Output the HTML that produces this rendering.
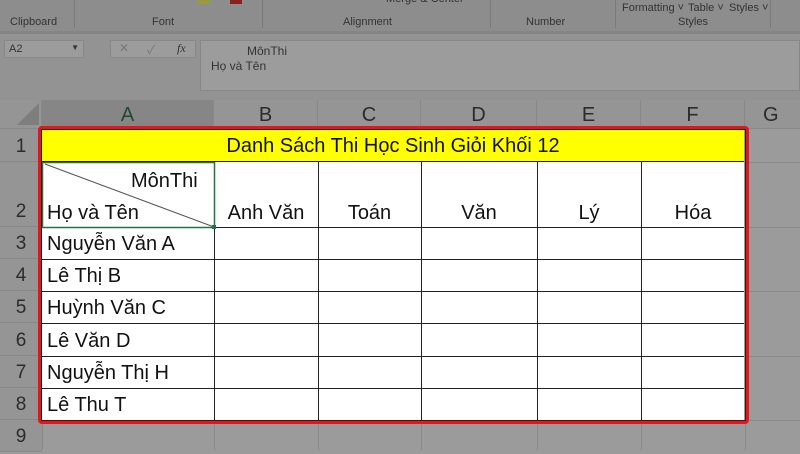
<!DOCTYPE html>
<html><head><meta charset="utf-8">
<style>
*{margin:0;padding:0;box-sizing:border-box}
body{width:800px;height:450px;overflow:hidden;background:#9b9b9b;position:relative;font-family:"Liberation Sans","Noto Sans CJK JP",sans-serif}
.a{position:absolute}
.rib{left:0;top:0;width:800px;height:31px;background:#8d8d8d;font-size:11px;color:#333}
.vs{background:#7a7a7a;width:1px}
.t{position:absolute;white-space:nowrap}
.colh{top:100px;height:28px;background:#959595;border-right:1px solid #888;text-align:center;font-size:20px;color:#2b2b2b;line-height:30px}
.rowh{left:0;width:42px;background:#959595;border-bottom:1px solid #888;text-align:center;font-size:19px;color:#2b2b2b}
.cell{position:absolute;font-size:20px;color:#111;white-space:nowrap}
</style></head><body>
<div class="a rib">
  <div class="t" style="left:10px;top:16px">Clipboard</div>
  <div class="t" style="left:152px;top:16px">Font</div>
  <div class="t" style="left:343px;top:16px">Alignment</div>
  <div class="t" style="left:526px;top:16px">Number</div>
  <div class="t" style="left:622px;top:2px">Formatting ˅</div>
  <div class="t" style="left:688px;top:2px">Table ˅</div>
  <div class="t" style="left:729px;top:2px">Styles ˅</div>
  <div class="t" style="left:678px;top:16px">Styles</div>
  <div class="t" style="left:386px;top:-7px">Merge &amp; Center</div>
  <div class="a" style="left:198px;top:0;width:12px;height:4px;background:#9a9a3a"></div>
  <div class="a" style="left:230px;top:0;width:12px;height:4px;background:#8a2020"></div>
  <div class="a vs" style="left:74px;top:0;height:28px"></div>
  <div class="a vs" style="left:262px;top:0;height:28px"></div>
  <div class="a vs" style="left:490px;top:0;height:28px"></div>
  <div class="a vs" style="left:615px;top:0;height:28px"></div>
  <div class="a vs" style="left:770px;top:0;height:28px"></div>
</div>
<div class="a" style="left:0;top:31px;width:800px;height:3px;background:#858585"></div>
<div class="a" style="left:0;top:34px;width:800px;height:66px;background:#939393"></div>
<div class="a" style="left:4px;top:40px;width:80px;height:18px;background:#9c9c9c;border:1px solid #888;font-size:11px;color:#333;padding:2px 4px">A2<span style="float:right;font-size:8px">▼</span></div>
<div class="a" style="left:110px;top:40px;width:86px;height:18px;background:#9c9c9c;border:1px solid #888;font-size:12px;color:#777"><span class="t" style="left:8px;top:0">✕</span><span class="t" style="left:36px;top:0">✓</span><span class="t" style="left:66px;top:0;color:#333;font-style:italic;font-family:'Liberation Serif',serif">fx</span></div>
<div class="a" style="left:200px;top:40px;width:600px;height:51px;background:#9c9c9c;border:1px solid #888;font-size:12px;color:#333">
  <div class="t" style="left:46px;top:3px">MônThi</div>
  <div class="t" style="left:10px;top:18px">Họ và Tên</div>
</div>
<div class="a" style="left:0;top:100px;width:42px;height:28px;background:#959595;border-right:1px solid #888"></div>
<svg class="a" style="left:15px;top:103px" width="25" height="23"><polygon points="24,0 24,22 2,22" fill="#7e7e7e"/></svg>
<div class="a colh" style="left:42px;width:172px;background:#868686;color:#1f4a2f">A</div>
<div class="a colh" style="left:214px;width:104px">B</div>
<div class="a colh" style="left:318px;width:103px">C</div>
<div class="a colh" style="left:421px;width:116px">D</div>
<div class="a colh" style="left:537px;width:104px">E</div>
<div class="a colh" style="left:641px;width:104px">F</div>
<div class="a colh" style="left:745px;width:70px;text-align:left;padding-left:18px">G</div>
<div class="a" style="left:0;top:128px;width:800px;height:1px;background:#888"></div>
<div class="a rowh" style="top:129px;height:33px;line-height:35px">1</div>
<div class="a rowh" style="top:162px;height:65px;line-height:100px">2</div>
<div class="a rowh" style="top:227px;height:32px;line-height:34px">3</div>
<div class="a rowh" style="top:259px;height:32px;line-height:34px">4</div>
<div class="a rowh" style="top:291px;height:32px;line-height:34px">5</div>
<div class="a rowh" style="top:323px;height:33px;line-height:35px">6</div>
<div class="a rowh" style="top:356px;height:32px;line-height:34px">7</div>
<div class="a rowh" style="top:388px;height:32px;line-height:34px">8</div>
<div class="a rowh" style="top:420px;height:32px;line-height:34px">9</div>
<div class="a" style="left:42px;top:129px;width:1px;height:321px;background:#888"></div>
<div class="a" style="left:214px;top:424px;width:1px;height:26px;background:#8a8a8a"></div>
<div class="a" style="left:318px;top:424px;width:1px;height:26px;background:#8a8a8a"></div>
<div class="a" style="left:421px;top:424px;width:1px;height:26px;background:#8a8a8a"></div>
<div class="a" style="left:537px;top:424px;width:1px;height:26px;background:#8a8a8a"></div>
<div class="a" style="left:641px;top:424px;width:1px;height:26px;background:#8a8a8a"></div>
<div class="a" style="left:745px;top:424px;width:1px;height:26px;background:#8a8a8a"></div>
<div class="a" style="left:749px;top:162px;width:51px;height:1px;background:#8a8a8a"></div>
<div class="a" style="left:749px;top:227px;width:51px;height:1px;background:#8a8a8a"></div>
<div class="a" style="left:749px;top:291px;width:51px;height:1px;background:#8a8a8a"></div>
<div class="a" style="left:749px;top:356px;width:51px;height:1px;background:#8a8a8a"></div>
<div class="a" style="left:749px;top:420px;width:51px;height:1px;background:#8a8a8a"></div>
<div class="a" style="left:42px;top:130px;width:702px;height:291px;background:#fff"></div>
<div class="a" style="left:42px;top:130px;width:702px;height:32px;background:#ffff00;border-bottom:1px solid #222"></div>
<div class="cell" style="left:42px;top:135px;width:702px;text-align:center">Danh Sách Thi Học Sinh Giỏi Khối 12</div>
<svg class="a" style="left:42px;top:162px" width="702" height="259">
 <g stroke="#222" stroke-width="1">
  <line x1="172.5" y1="0" x2="172.5" y2="259"/>
  <line x1="276.5" y1="0" x2="276.5" y2="259"/>
  <line x1="379.5" y1="0" x2="379.5" y2="259"/>
  <line x1="495.5" y1="0" x2="495.5" y2="259"/>
  <line x1="599.5" y1="0" x2="599.5" y2="259"/>
  <line x1="0" y1="65.5" x2="702" y2="65.5"/>
  <line x1="0" y1="97.5" x2="702" y2="97.5"/>
  <line x1="0" y1="129.5" x2="702" y2="129.5"/>
  <line x1="0" y1="161.5" x2="702" y2="161.5"/>
  <line x1="0" y1="194.5" x2="702" y2="194.5"/>
  <line x1="0" y1="226.5" x2="702" y2="226.5"/>
  <line x1="0" y1="258.5" x2="702" y2="258.5"/>
  <line x1="3" y1="2" x2="172" y2="65" stroke="#555"/>
 </g>
 <rect x="0.5" y="0.5" width="172" height="65" fill="none" stroke="#217346" stroke-width="1.5"/>
 <rect x="170" y="63" width="4" height="4" fill="#217346"/>
</svg>
<div class="cell" style="left:131px;top:170px">MônThi</div>
<div class="cell" style="left:47px;top:202px">Họ và Tên</div>
<div class="cell" style="left:214px;top:202px;width:104px;text-align:center">Anh Văn</div>
<div class="cell" style="left:318px;top:202px;width:103px;text-align:center">Toán</div>
<div class="cell" style="left:421px;top:202px;width:116px;text-align:center">Văn</div>
<div class="cell" style="left:537px;top:202px;width:104px;text-align:center">Lý</div>
<div class="cell" style="left:641px;top:202px;width:104px;text-align:center">Hóa</div>
<div class="cell" style="left:47px;top:233px">Nguyễn Văn A</div>
<div class="cell" style="left:47px;top:265px">Lê Thị B</div>
<div class="cell" style="left:47px;top:297px">Huỳnh Văn C</div>
<div class="cell" style="left:47px;top:330px">Lê Văn D</div>
<div class="cell" style="left:47px;top:362px">Nguyễn Thị H</div>
<div class="cell" style="left:47px;top:394px">Lê Thu T</div>
<div class="a" style="left:38px;top:126px;width:711px;height:298px;border:3px solid #e8141a;border-radius:4px"></div>
<div class="a" style="left:41px;top:129px;width:705px;height:292px;border:1px solid #222"></div>
</body></html>
